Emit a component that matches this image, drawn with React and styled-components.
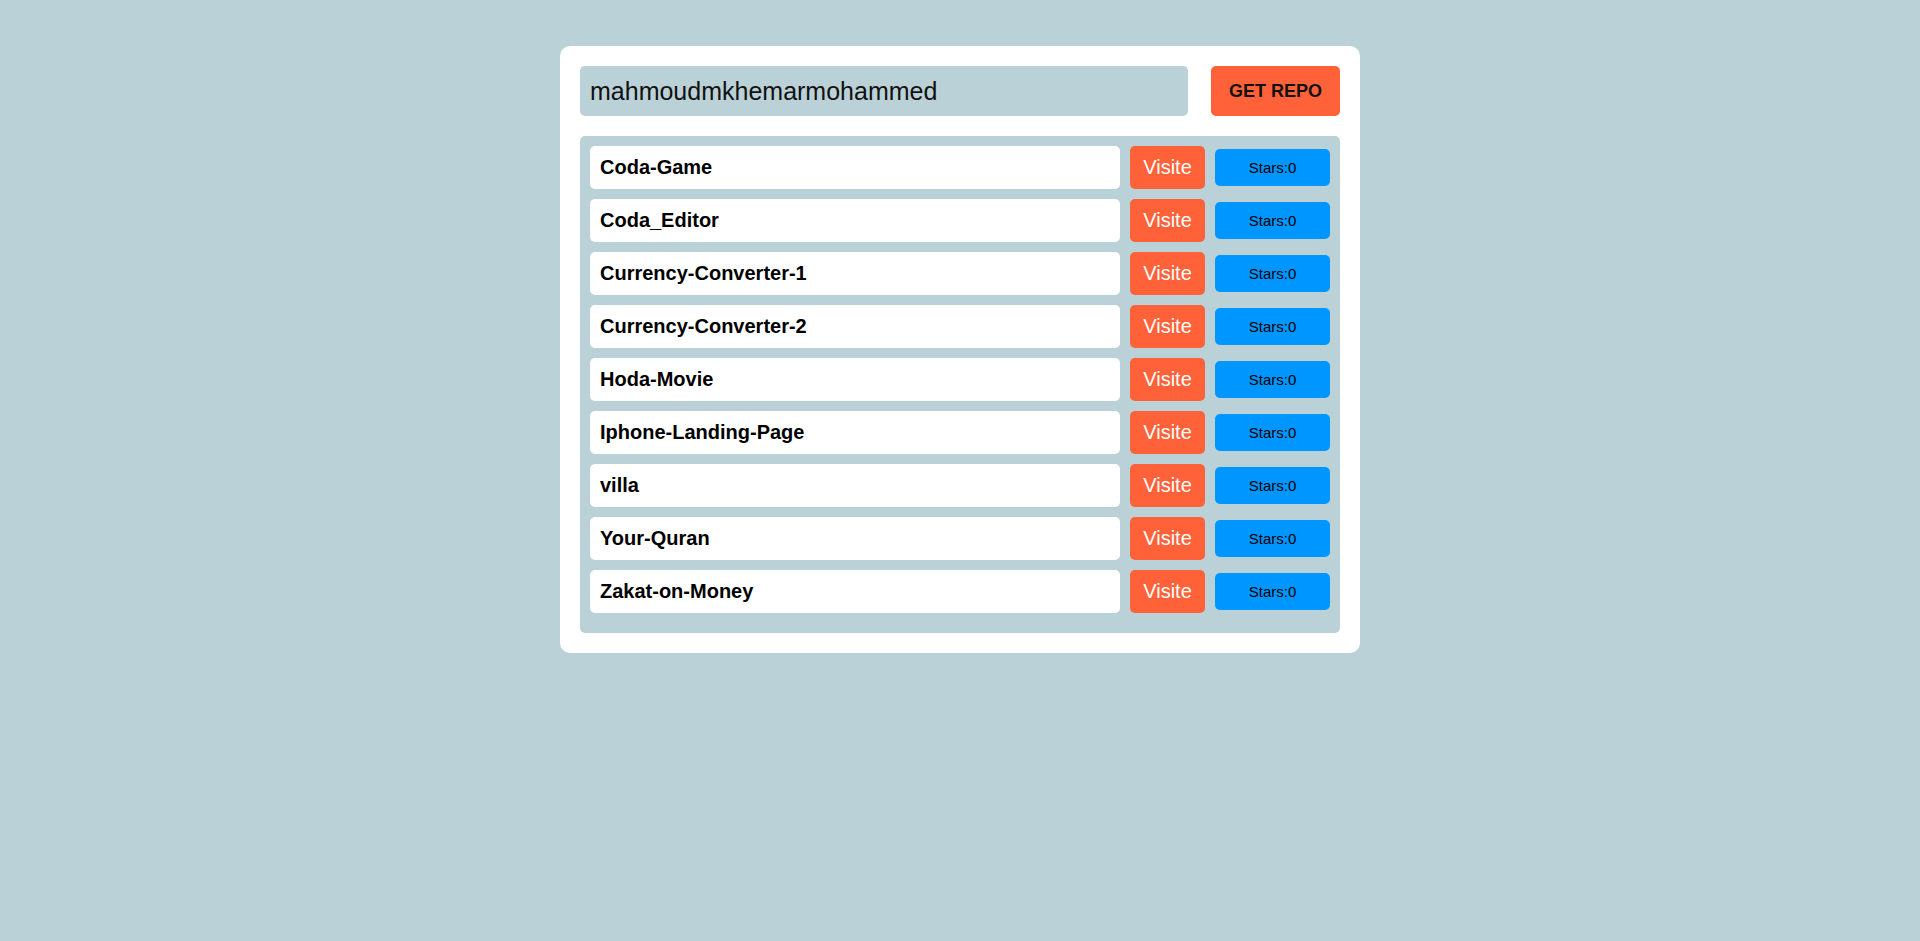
import React, { useState } from "react";
import styled, { createGlobalStyle } from "styled-components";

const repos = [
  "Coda-Game",
  "Coda_Editor",
  "Currency-Converter-1",
  "Currency-Converter-2",
  "Hoda-Movie",
  "Iphone-Landing-Page",
  "villa",
  "Your-Quran",
  "Zakat-on-Money",
];

const App = () => {
  const [user, setUser] = useState("mahmoudmkhemarmohammed");

  return (
    <>
      <GlobalStyle />
      <Page>
        <Card>
          <SearchForm onSubmit={(e) => e.preventDefault()}>
            <UserInput value={user} onChange={(e) => setUser(e.target.value)} />
            <GetButton type="submit">GET REPO</GetButton>
          </SearchForm>
          <RepoList>
            {repos.map((name) => (
              <RepoRow key={name}>
                <RepoName>{name}</RepoName>
                <VisitButton>Visite</VisitButton>
                <Stars>Stars:0</Stars>
              </RepoRow>
            ))}
          </RepoList>
        </Card>
      </Page>
    </>
  );
};

const GlobalStyle = createGlobalStyle`
  * {
    box-sizing: border-box;
  }
  body {
    margin: 0;
    background: #bad1d7;
    font-family: "Liberation Sans", Arial, sans-serif;
  }
`;

const Page = styled.div`
  display: flex;
  justify-content: center;
  padding-top: 46px;
  min-height: 100vh;
`;

const Card = styled.div`
  width: 800px;
  align-self: flex-start;
  background: #fff;
  border-radius: 10px;
  padding: 20px;
`;

const SearchForm = styled.form`
  display: flex;
  justify-content: space-between;
  height: 50px;
`;

const UserInput = styled.input`
  width: 80%;
  height: 100%;
  border: none;
  outline: none;
  border-radius: 5px;
  background: #bad1d7;
  padding: 0 10px;
  font-family: inherit;
  font-size: 25px;
  color: #111;
`;

const GetButton = styled.button`
  width: 17%;
  height: 100%;
  border: none;
  border-radius: 5px;
  background: #ff6138;
  color: #111;
  font-family: inherit;
  font-weight: bold;
  font-size: 18px;
  cursor: pointer;
`;

const RepoList = styled.div`
  margin-top: 20px;
  background: #bad1d7;
  border-radius: 5px;
  padding: 10px;
`;

const RepoRow = styled.div`
  display: flex;
  align-items: center;
  gap: 10px;
  height: 43px;
  margin-bottom: 10px;
`;

const RepoName = styled.div`
  flex: 1;
  height: 100%;
  display: flex;
  align-items: center;
  padding-left: 10px;
  background: #fff;
  border-radius: 5px;
  font-weight: bold;
  font-size: 20px;
  color: #000;
`;

const VisitButton = styled.button`
  width: 75px;
  height: 100%;
  border: none;
  border-radius: 5px;
  background: #ff6138;
  color: #fff;
  font-family: inherit;
  font-size: 20px;
  padding: 0;
  cursor: pointer;
`;

const Stars = styled.div`
  width: 115px;
  height: 37px;
  display: flex;
  align-items: center;
  justify-content: center;
  border-radius: 5px;
  background: #0096ff;
  color: #000;
  font-size: 15px;
`;

export default App;
